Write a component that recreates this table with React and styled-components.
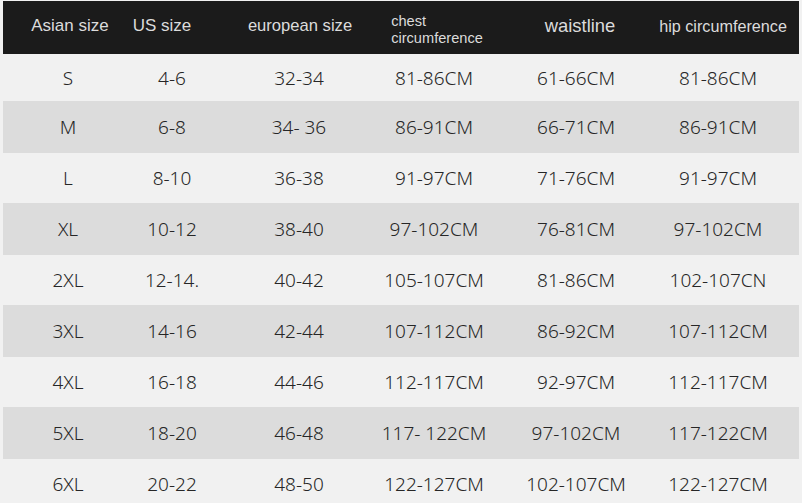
import React from "react";
import styled, { createGlobalStyle } from "styled-components";

const GlobalStyle = createGlobalStyle`
	html, body {
		margin: 0;
		padding: 0;
		background: #f1f1f1;
	}
`;

// column tracks are set so each label lands on its centre line
const headCols = "134px 50px 226px 48px 238px 48px 1fr";
const bodyCols = "130px 78px 176px 94px 190px 94px 1fr";

const heads = [
	{ label: "Asian size", size: 17 },
	{ label: "US size", size: 17 },
	{ label: "european size", size: 16.6 },
	{ label: ["chest", "circumference"], size: 14.6 },
	{ label: "waistline", size: 18.4 },
	{ label: "hip circumference", size: 16.2 },
];

const rows = [
	["S", "4-6", "32-34", "81-86CM", "61-66CM", "81-86CM"],
	["M", "6-8", "34- 36", "86-91CM", "66-71CM", "86-91CM"],
	["L", "8-10", "36-38", "91-97CM", "71-76CM", "91-97CM"],
	["XL", "10-12", "38-40", "97-102CM", "76-81CM", "97-102CM"],
	["2XL", "12-14.", "40-42", "105-107CM", "81-86CM", "102-107CN"],
	["3XL", "14-16", "42-44", "107-112CM", "86-92CM", "107-112CM"],
	["4XL", "16-18", "44-46", "112-117CM", "92-97CM", "112-117CM"],
	["5XL", "18-20", "46-48", "117- 122CM", "97-102CM", "117-122CM"],
	["6XL", "20-22", "48-50", "122-127CM", "102-107CM", "122-127CM"],
];

const SizeChart = () => {
	return (
		<Table>
			<HeadRow>
				{heads.map((h, i) => (
					<HeadCell key={i} $size={h.size}>
						{Array.isArray(h.label) ? (
							<Stack>
								{h.label.map((l) => (
									<span key={l}>{l}</span>
								))}
							</Stack>
						) : (
							h.label
						)}
					</HeadCell>
				))}
			</HeadRow>
			{rows.map((r, i) => (
				<Row key={r[0]} $shaded={i % 2 === 1}>
					{r.map((v, j) => (
						<Cell key={j}>{v}</Cell>
					))}
				</Row>
			))}
		</Table>
	);
};

export default function App() {
	return (
		<>
			<GlobalStyle />
			<Page>
				<SizeChart />
			</Page>
		</>
	);
}

const Page = styled.div`
	width: 802px;
	height: 503px;
	overflow: hidden;
	padding: 1px 3px 0;
	box-sizing: border-box;
	background: #f1f1f1;
`;

const Table = styled.div`
	display: flex;
	flex-direction: column;
	width: 796px;
`;

const HeadRow = styled.div`
	display: grid;
	grid-template-columns: ${headCols};
	height: 53px;
	background: #1b1b1b;
	color: #dcdcdc;
	font-family: "Liberation Sans", Arial, sans-serif;
`;

const HeadCell = styled.div`
	display: flex;
	align-items: center;
	justify-content: center;
	min-width: 0;
	white-space: nowrap;
	font-size: ${(p) => p.$size}px;
	padding-bottom: 3px;
`;

const Stack = styled.div`
	display: flex;
	flex-direction: column;
	line-height: 17px;
	padding-top: 7px;
`;

const Row = styled.div`
	display: grid;
	grid-template-columns: ${bodyCols};
	height: ${(p) => (p.$shaded ? 52 : 50)}px;
	flex-shrink: 0;
	background: ${(p) => (p.$shaded ? "#dcdcdc" : "#f1f1f1")};
	color: #262626;
	font-family: "Noto Sans", "Open Sans", sans-serif;
	font-weight: 300;
	font-size: 19px;

	&:nth-child(2) {
		height: 47px;
	}
`;

const Cell = styled.div`
	display: flex;
	align-items: center;
	justify-content: center;
	min-width: 0;
	white-space: nowrap;
`;
